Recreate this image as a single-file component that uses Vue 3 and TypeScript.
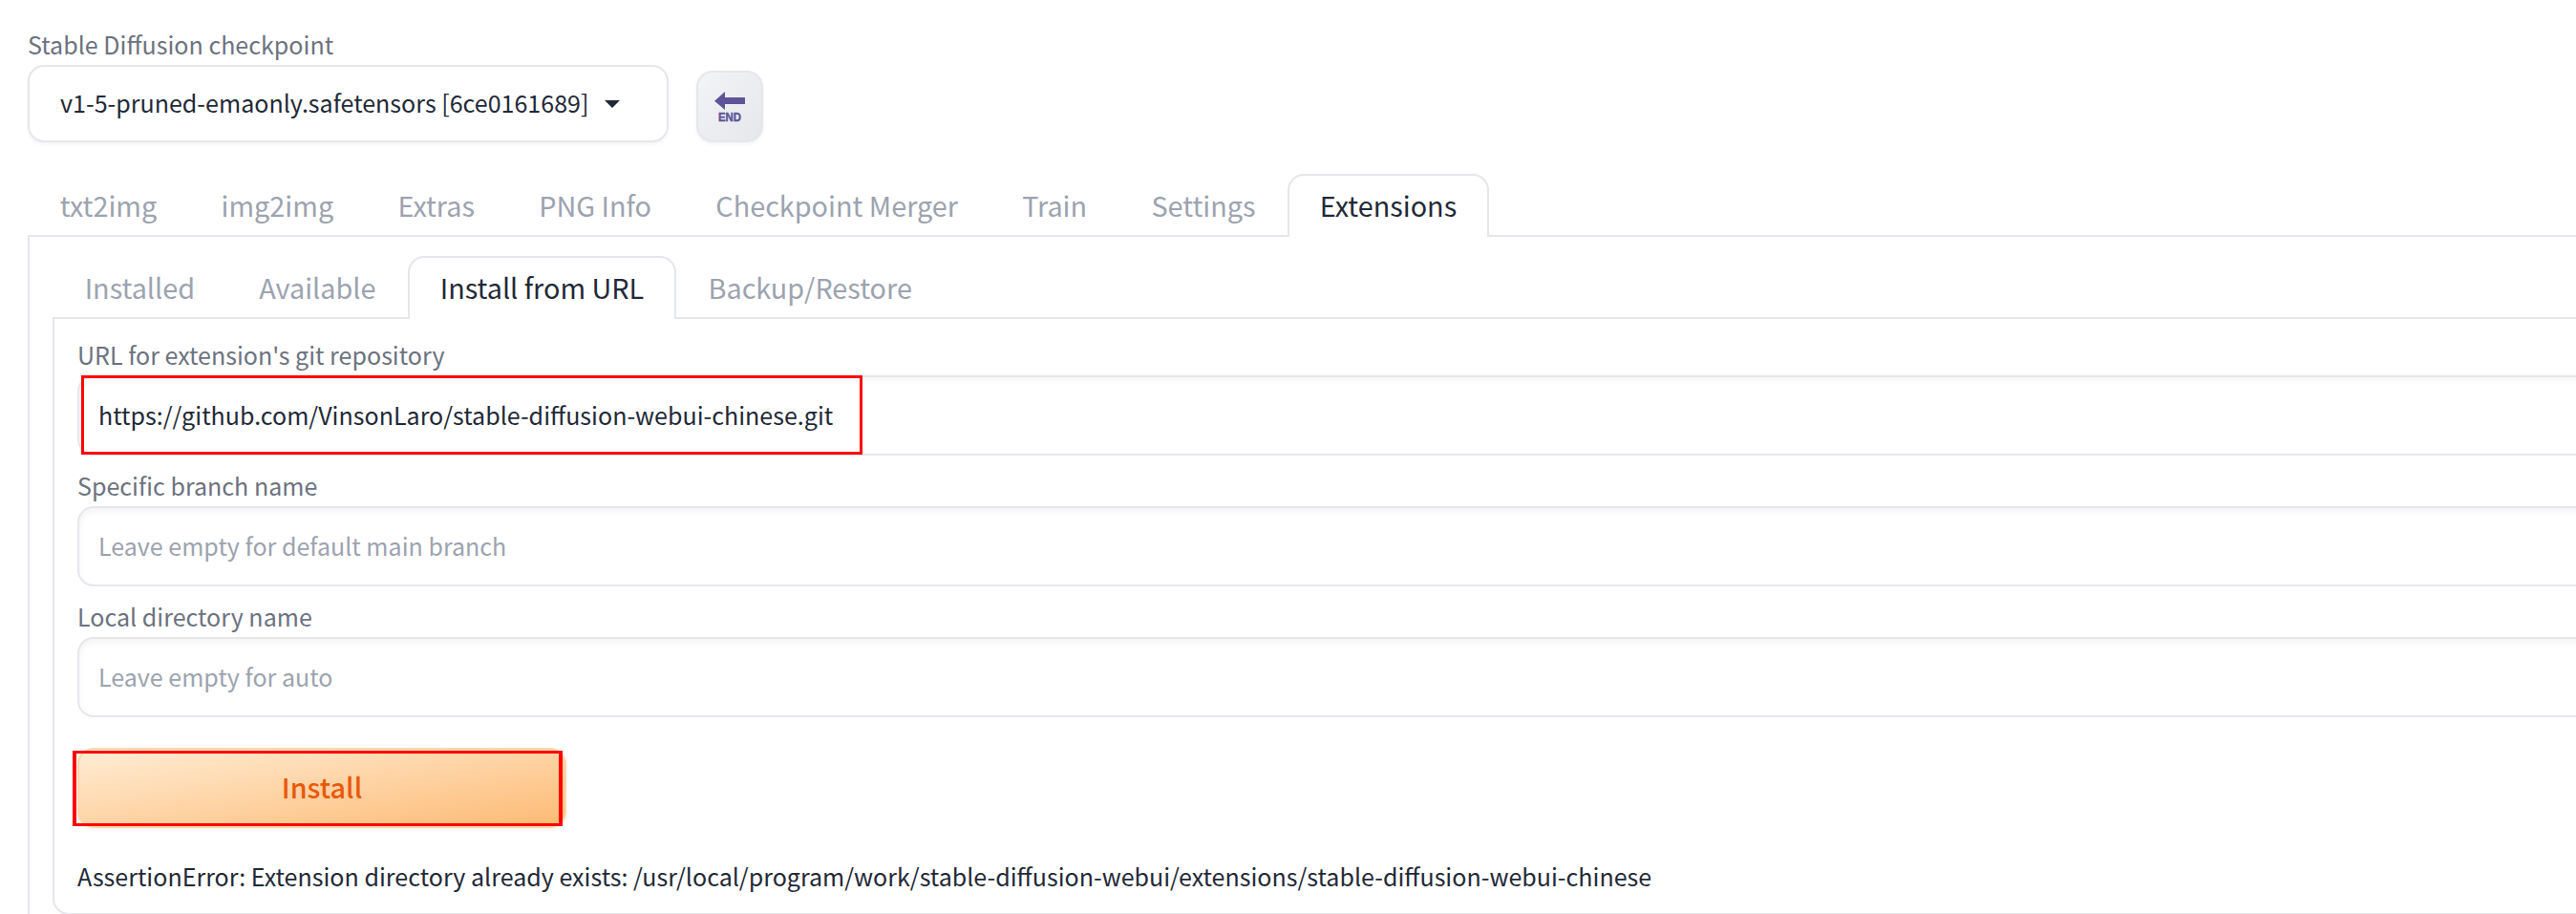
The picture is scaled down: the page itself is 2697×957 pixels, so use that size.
<script setup lang="ts">
interface Tab { label: string; active?: boolean }

const mainTabs: Tab[] = [
  { label: 'txt2img' },
  { label: 'img2img' },
  { label: 'Extras' },
  { label: 'PNG Info' },
  { label: 'Checkpoint Merger' },
  { label: 'Train' },
  { label: 'Settings' },
  { label: 'Extensions', active: true },
]

const subTabs: Tab[] = [
  { label: 'Installed' },
  { label: 'Available' },
  { label: 'Install from URL', active: true },
  { label: 'Backup/Restore' },
]
</script>

<template>
  <div class="page">
    <div class="top">
      <div class="field-check">
        <div class="label">Stable Diffusion checkpoint</div>
        <div class="select">
          <span>v1-5-pruned-emaonly.safetensors [6ce0161689]</span>
          <span class="caret"></span>
        </div>
      </div>
      <button class="end-btn" type="button" aria-label="End">
        <svg width="70" height="75" viewBox="0 0 70 75">
          <path d="M19 31.7 30 22v6h21v7H30v6z" fill="#5f5499" />
          <text x="35" y="53" text-anchor="middle" textLength="24" lengthAdjust="spacingAndGlyphs" class="end-text">END</text>
        </svg>
      </button>
    </div>

    <nav class="tabs main-tabs">
      <button v-for="t in mainTabs" :key="t.label" class="tab" :class="{ active: t.active }" type="button">{{ t.label }}</button>
    </nav>

    <section class="outer">
      <nav class="tabs sub-tabs">
        <button v-for="t in subTabs" :key="t.label" class="tab" :class="{ active: t.active }" type="button">{{ t.label }}</button>
      </nav>

      <div class="inner">
        <label class="label">URL for extension's git repository</label>
        <div class="marked">
          <input class="input" type="text" value="https://github.com/VinsonLaro/stable-diffusion-webui-chinese.git" />
          <span class="mark mark-url"></span>
        </div>

        <label class="label second">Specific branch name</label>
        <input class="input" type="text" placeholder="Leave empty for default main branch" />

        <label class="label second">Local directory name</label>
        <input class="input" type="text" placeholder="Leave empty for auto" />

        <div class="marked install-wrap">
          <button class="install" type="button">Install</button>
          <span class="mark mark-install"></span>
        </div>

        <p class="error">AssertionError: Extension directory already exists: /usr/local/program/work/stable-diffusion-webui/extensions/stable-diffusion-webui-chinese</p>
      </div>
    </section>
  </div>
</template>

<style>
html, body { margin: 0; background: #fff; overflow: hidden; }
</style>

<style scoped>
.page {
  width: 2697px;
  height: 957px;
  overflow: hidden;
  position: relative;
  box-sizing: border-box;
  padding: 32px 0 0 29px;
  background: #fff;
  font-family: "Noto Sans CJK SC", "Source Sans Pro", "Noto Sans", sans-serif;
  color: #1f2937;
}
.top {
  display: flex;
  align-items: flex-end;
  gap: 29px;
}
.label {
  display: block;
  font-size: 25.05px;
  line-height: 29px;
  height: 34px;
  margin-bottom: 2px;
  color: #6b7280;
}
.select {
  width: 671px;
  height: 81px;
  box-sizing: border-box;
  border: 2px solid #e5e7eb;
  border-radius: 17px;
  background: #fff;
  box-shadow: 0 2px 4px rgba(0, 0, 0, .05);
  display: flex;
  align-items: center;
  padding: 0 32px 3px;
  font-size: 25.05px;
  white-space: nowrap;
  color: #1f2937;
}
.caret {
  margin-left: 17px;
  margin-top: 3px;
  width: 0;
  height: 0;
  border-left: 8.5px solid transparent;
  border-right: 8.5px solid transparent;
  border-top: 8px solid #1f2937;
}
.end-btn {
  width: 70px;
  height: 75px;
  padding: 0;
  box-sizing: border-box;
  border: 2px solid #e5e7eb;
  border-radius: 17px;
  background: linear-gradient(to bottom right, #f3f4f6, #e5e7eb);
  box-shadow: 0 2px 4px rgba(0, 0, 0, .05);
  display: flex;
  align-items: center;
  justify-content: center;
}
.end-btn svg { flex: none; margin: -2px; }
.end-text {
  font-family: "Liberation Sans", sans-serif;
  font-weight: 700;
  font-size: 13px;
  fill: #5f5499;
  stroke: #5f5499;
  stroke-width: 0.5px;
}
.tabs {
  display: flex;
  border-bottom: 2px solid #e5e7eb;
  margin-right: -40px;
}
.main-tabs { margin-top: 33px; height: 64px; }
.sub-tabs { height: 64px; }
.tab {
  appearance: none;
  background: none;
  border: 2px solid transparent;
  border-bottom: 0;
  border-radius: 17px 17px 0 0;
  padding: 0 31.65px 3px;
  height: 66px;
  margin-bottom: -2px;
  font-family: inherit;
  font-size: 28.8px;
  color: #9ca3af;
  white-space: nowrap;
}
.tab.active {
  background: #fff;
  border-color: #e5e7eb;
  color: #1f2937;
}
.outer {
  border-left: 2px solid #e5e7eb;
  margin-right: -40px;
  padding: 20px 0 0 24px;
  height: 720px;
}
.inner {
  border-left: 2px solid #e5e7eb;
  border-bottom: 2px solid #e5e7eb;
  border-bottom-left-radius: 17px;
  padding: 23px 0 0 24px;
  height: 624px;
  box-sizing: border-box;
}
.input {
  display: block;
  width: 100%;
  height: 84px;
  box-sizing: border-box;
  border: 2px solid #e5e7eb;
  border-right: 0;
  border-radius: 17px 0 0 17px;
  padding: 0 20px 3px;
  background: #fff;
  box-shadow: inset 0 3px 7px rgba(0, 0, 0, .05);
  font-family: inherit;
  font-size: 25.05px;
  color: #1f2937;
  outline: none;
}
.input::placeholder { color: #9ca3af; opacity: 1; }
.label.second { margin-top: 17px; }
.marked { position: relative; }
.mark {
  position: absolute;
  border: 3px solid #ff0000;
  box-sizing: border-box;
  pointer-events: none;
}
.mark-url { left: 4px; top: 0; width: 818px; height: 83px; }
.install-wrap { margin-top: 32px; width: 512px; }
.install {
  display: block;
  width: 512px;
  height: 84px;
  box-sizing: border-box;
  border: 2px solid #fed7aa;
  border-radius: 17px;
  background: linear-gradient(to bottom right, #ffedd5, #fdba74);
  box-shadow: 0 2px 4px rgba(0, 0, 0, .05);
  padding: 0 0 3px;
  font-family: inherit;
  font-size: 28.8px;
  font-weight: 500;
  color: #ea580c;
}
.mark-install {
  left: -5px;
  top: 3px;
  width: 513px;
  height: 79px;
  border-width: 3px 4px;
}
.error {
  margin: 34px 0 0;
  font-size: 25.05px;
  line-height: 32px;
  white-space: nowrap;
  color: #1f2937;
}
</style>
